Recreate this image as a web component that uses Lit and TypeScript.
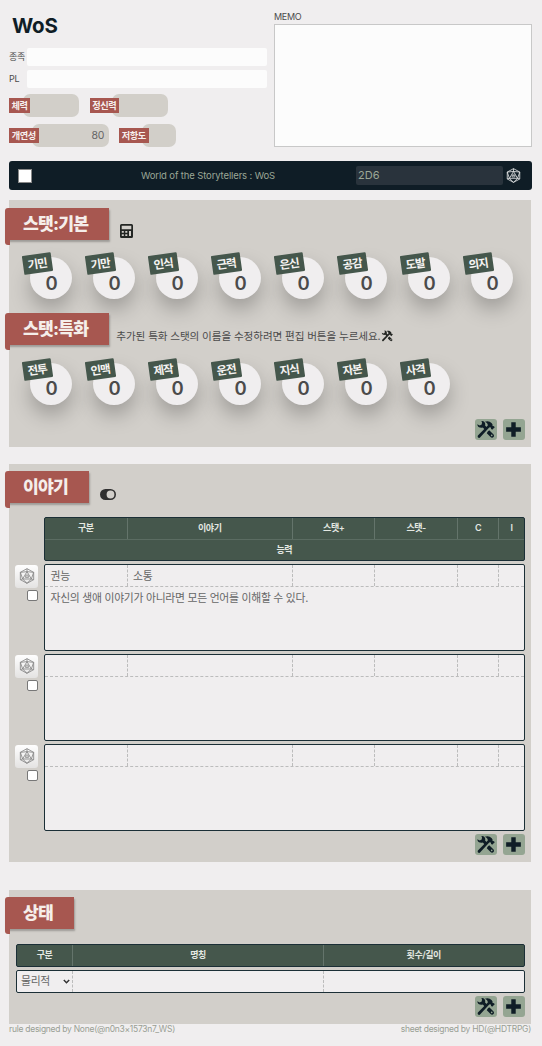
import { LitElement, html, css } from "lit";
import { customElement, property } from "lit/decorators.js";
import { classMap } from "lit/directives/class-map.js";

const die = html`<svg viewBox="0 0 24 24" fill="none" stroke="currentColor" stroke-width="1.3" stroke-linejoin="round">
  <path d="M12 1 22 6.500v11L12 23 2 17.500v-11Z"/>
  <path d="M12 1v4.500M2 6.500 12 5.500l10 1M12 5.500 5.500 16.500h13ZM2 6.500l3.500 10M22 6.500l-3.500 10M2 17.500l3.500-1L12 23l6.500-6.500 3.500 1"/>
  <path d="M9.800 14.300v-3l2.200-1.300 2.200 1.300v3ZM10.500 12h3" stroke-width="1.100"/>
</svg>`;

const tools = html`<svg viewBox="0 0 24 24" fill="currentColor">
  <path d="M6.800 1.300c2.800-.5 5.200 1.500 4.900 4.600l-.2 1.200 3 3-2.700 2.700-3.200-3.200C5.200 10.500 1.700 8.700 1.600 5.300l3.100 1.600 2.500-1.100.4-2.600Z"/>
  <path d="m14.900 14.500 1.800-1.700 5.200 5.100c1.200 1.200 1 2.800.2 3.700s-2.600 1.100-3.700 0l-4.800-4.800Zm4.200 4.200a1 1 0 1 0 1.500 1.500 1 1 0 0 0-1.500-1.500Z" fill-rule="evenodd"/>
  <path d="M11.200 2.200c3.400-1.500 6.500-.4 8.700 2l1.100 1.800-.2 1.300.8.600.8-.3 1.300 1.500-3.300 3.300-1.500-1.300.1-1-.9-.8-1.400.1L5.100 22.200c-1.400 1.300-4-.9-2.700-2.700L14.900 7c.2-2-1.300-3.800-3.700-4.800Z"/>
</svg>`;

const plus = html`<svg viewBox="0 0 24 24"><path fill="currentColor" d="M9.200 2.700h5.600v6.500h6.500v5.600h-6.500v6.500H9.200v-6.500H2.700V9.200h6.500Z"/></svg>`;

const calculator = html`<svg viewBox="0 0 13 14"><path fill="currentColor" fill-rule="evenodd" d="M1.500 0h10A1.500 1.500 0 0 1 13 1.500v11a1.500 1.500 0 0 1-1.500 1.500h-10A1.500 1.500 0 0 1 0 12.500v-11A1.500 1.500 0 0 1 1.500 0ZM1.700 1.800v3.400h9.600V1.800ZM1.800 7v1.700h2V7Zm3.500 0v1.700h2V7ZM9 7v5h2V7ZM1.800 10.300V12h2v-1.700Zm3.500 0V12h2v-1.700Z"/></svg>`;

const toggle = html`<svg viewBox="0 0 16 11"><path fill="currentColor" fill-rule="evenodd" d="M5.500 0h5a5.500 5.500 0 0 1 0 11h-5a5.500 5.500 0 0 1 0-11Zm5 1.600a3.900 3.900 0 1 0 0 7.800 3.900 3.900 0 0 0 0-7.800Z"/></svg>`;

@customElement("stat-disc")
class StatDisc extends LitElement {
  @property() label = "";
  @property() value = "0";
  static styles = css`
    :host { display: block; width: 42px; height: 42px; position: relative; }
    .disc { width: 42px; height: 42px; box-sizing: border-box; padding: 9px 0 0 1px; border-radius: 50%; background: #f0eeef;
      box-shadow: 0 10px 20px rgba(0,0,0,.25); display: grid; place-items: center; font-weight: 600; font-size: 18.500px; line-height: 22px; color: #4b4b4b; }
    .tag { position: absolute; left: -7px; top: -3px; width: 28.500px; height: 19px; border-radius: 1px; background: #45574c; color: #f5f3f1;
      font-size: 11.500px; line-height: 20px; font-weight: 600; text-align: center; letter-spacing: -.9px; transform: rotate(-8deg); }
  `;
  render() {
    return html`<div class="disc">${this.value}</div><div class="tag">${this.label}</div>`;
  }
}

@customElement("section-banner")
class SectionBanner extends LitElement {
  @property() label = "";
  static styles = css`
    :host { display: block; margin-left: -4px; }
    .flag { height: 32px; padding: 0 21px 0 18px; border-radius: 3px 0 0 0; background: #a75750; color: #f5eeea; box-sizing: border-box;
      font-size: 17.200px; line-height: 32px; font-weight: 800; letter-spacing: -.8px; white-space: nowrap; box-shadow: 1px 2px 2px rgba(0,0,0,.25); position: relative; }
    .fold { width: 5px; height: 5px; background: #a75750; border-radius: 0 0 0 3px; position: relative; }
  `;
  render() {
    return html`<div class="flag">${this.label}</div><div class="fold"></div>`;
  }
}

@customElement("app-root")
class AppRoot extends LitElement {
  basic = ["기민", "기만", "인식", "근력", "은신", "공감", "도발", "의지"];
  special = ["전투", "인맥", "제작", "운전", "지식", "자본", "사격"];
  stories = [
    { kind: "권능", name: "소통", text: "자신의 생애 이야기가 아니라면 모든 언어를 이해할 수 있다." },
    { kind: "", name: "", text: "" },
    { kind: "", name: "", text: "" },
  ];

  static styles = css`
    :host { display: block; height: 1046px; box-sizing: border-box; padding: 10px 10.500px 0 9px; background: #f0eeef; color: #4b4b4b;
      font-family: Inter, "Noto Sans CJK KR", sans-serif; font-size: 11px; overflow: hidden; }
    * { box-sizing: border-box; }
    svg { display: block; }
    .top { display: grid; grid-template-columns: 258px 257.500px; column-gap: 7px; height: 151px; }
    h1 { margin: 0 0 7px 3px; height: 31px; line-height: 32px; font-size: 20.500px; font-weight: 700; letter-spacing: -.2px; color: #0f1d26; }
    .field { display: flex; align-items: center; height: 18px; margin-bottom: 3.500px; font-size: 9px; line-height: 17px; letter-spacing: -.2px; }
    .field span { width: 18px; height: 18px; white-space: nowrap; }
    .field i { flex: 1; height: 18px; border-radius: 2px; background: #fcfcfc; }
    .chips { display: flex; gap: 10.500px; height: 22.500px; margin-top: 6.500px; }
    .chips.second { margin-top: 7.500px; }
    .chip { display: flex; align-items: center; }
    .chip b { height: 15px; line-height: 15.500px; padding: 0 2.500px; background: #a75750; color: #f7f0ee; font-size: 9.200px; font-weight: 600; letter-spacing: -.5px; white-space: nowrap; position: relative; z-index: 1; text-align: center; width: 29.500px; }
    .chip.short b { width: 21px; }
    .chip span { height: 22.500px; margin-left: -7px; border-radius: 7px; background: #d2cfc9; width: 56px; text-align: right; padding-right: 4px; line-height: 23px; font-size: 10.500px; color: #656565; }
    .chip.wide span { width: 77px; }
    .chip.narrow span { width: 34.500px; }
    .memo-label { height: 14px; line-height: 13px; font-size: 9px; letter-spacing: -.3px; }
    .memo { height: 123px; background: #fcfcfc; border: 1px solid #c8c8c8; }
    .bar { height: 29px; border-radius: 3px; background: #0f1d26; display: grid; grid-template-columns: 14px 1fr 147px 18px; align-items: center; padding: 0 11px 0 8.500px; color: #9ba796; }
    .box { width: 14px; height: 14px; background: #fff; border: .5px solid #888; }
    .bar p { margin: 0 0 0 29px; text-align: center; font-size: 9.500px; letter-spacing: -.13px; }
    .bar .roll { height: 19px; line-height: 19px; padding-left: 2.500px; border-radius: 2px; background: #29333c; font-size: 11px; }
    .bar svg { width: 15px; height: 15px; margin-left: 3px; color: #e6e8e8; }
    .panel { background: #d2cfca; width: 522px; }
    .stats { margin-top: 10px; height: 246.500px; padding-top: 7.500px; }
    .head { display: flex; height: 37px; }
    .head .calc { width: 13px; margin: 16.500px 0 0 10.500px; height: 14px; color: #232623; }
    .head .tog { width: 16px; height: 11px; margin: 18px 0 0 10.500px; color: #303030; }
    .head p { display: flex; align-items: center; height: 14px; margin: 15.500px 0 0 7px; font-size: 10.600px; letter-spacing: -.1px; white-space: nowrap; }
    .head p svg { width: 12px; height: 12px; color: #232623; }
    .discs { display: flex; gap: 21px; padding: 12.500px 0 0 21px; height: 68.500px; }
    .actions { display: flex; justify-content: flex-end; gap: 6.500px; padding-right: 6.500px; }
    .actions button { width: 21.500px; height: 21px; border: 0; border-radius: 3px; background: #94a592; color: #0f1d26; padding: 1px; display: grid; place-items: center; }
    .actions svg { width: 19px; height: 19px; }
    .stats .actions { margin-top: .5px; }
    .story { margin-top: 17px; height: 398.500px; padding-top: 7px; }
    .cols { display: grid; grid-template-columns: 82.500px 165.500px 82.400px 82.500px 41.500px 1fr; }
    .grid { border: 1px solid #1b2f36; border-radius: 2px; overflow: hidden; background: #f0eeef; }
    .thead { background: #45574c; color: #e4e8e2; font-size: 9px; font-weight: 600; letter-spacing: -.45px; text-align: center; }
    .thead .cols > *, .thead .cols2 > * { line-height: 20px; height: 21px; border-right: 1px solid #64746b; }
    .thead .cols > :last-child, .thead .cols2 > :last-child { border-right: 0; }
    .thead .full { border-top: 1px solid #5b6c62; height: 22px; line-height: 20px; }
    .story .thead { margin: 9px 6.500px 3.500px 35px; height: 44px; }
    .tbody { font-size: 10.800px; letter-spacing: -.25px; color: #666; }
    .tbody .cols { border-bottom: 1px dashed #bcbcbc; }
    .tbody .cols > *, .tbody .cols2 > * { height: 21px; line-height: 23px; padding-left: 5.500px; border-right: 1px dashed #bcbcbc; }
    .tbody .cols > :last-child, .tbody .cols2 > :last-child { border-right: 0; }
    .note { line-height: 23px; padding-left: 5.500px; }
    .entry { display: grid; grid-template-columns: 23px 480.500px; column-gap: 6px; padding-left: 6px; height: 90px; }
    .entry .tbody { height: 86.500px; }
    .side { display: flex; flex-direction: column; align-items: flex-end; }
    .side button { width: 23px; height: 23px; padding: 3.500px; border: 0; border-radius: 3px; background: linear-gradient(#fefefe, #e4e3e2); color: #888; margin: .5px 0 2px; }
    .side svg { width: 16px; height: 16px; }
    .check { width: 11px; height: 11px; border: 1px solid #777; border-radius: 2px; background: #fff; }
    .state { margin-top: 28px; height: 133.500px; padding-top: 7px; }
    .cols2 { display: grid; grid-template-columns: 56px 251px 1fr; }
    .state .grid { height: 23px; margin: 0 6.500px 3px 7px; }
    .state .thead { margin-top: 9.500px; }
    .state .pick { display: flex; align-items: center; justify-content: space-between; padding: 0 2px 0 4px; }
    .pick svg { width: 7px; height: 5px; color: #333; }
    footer { display: flex; justify-content: space-between; font-size: 8.500px; line-height: 11px; letter-spacing: -.27px; color: #999e94; width: 522px; }
  `;

  actions() {
    return html`<div class="actions"><button>${tools}</button><button>${plus}</button></div>`;
  }

  chip(label: string, kind: string, value = "") {
    return html`<div class=${classMap({ chip: true, short: label.length < 3, wide: kind === "wide", narrow: kind === "narrow" })}><b>${label}</b><span>${value}</span></div>`;
  }

  render() {
    return html`
      <div class="top">
        <div>
          <h1>WoS</h1>
          <div class="field"><span>종족</span><i></i></div>
          <div class="field"><span>PL</span><i></i></div>
          <div class="chips">${this.chip("체력", "")}${this.chip("정신력", "")}</div>
          <div class="chips second">${this.chip("개연성", "wide", "80")}${this.chip("저항도", "narrow")}</div>
        </div>
        <div><div class="memo-label">MEMO</div><div class="memo"></div></div>
      </div>
      <div class="bar"><div class="box"></div><p>World of the Storytellers : WoS</p><div class="roll">2D6</div>${die}</div>

      <div class="panel stats">
        <div class="head"><section-banner label="스탯:기본"></section-banner><div class="calc">${calculator}</div></div>
        <div class="discs">${this.basic.map((s) => html`<stat-disc label=${s}></stat-disc>`)}</div>
        <div class="head"><section-banner label="스탯:특화"></section-banner><p>추가된 특화 스탯의 이름을 수정하려면 편집 버튼을 누르세요.${tools}</p></div>
        <div class="discs">${this.special.map((s) => html`<stat-disc label=${s}></stat-disc>`)}</div>
        ${this.actions()}
      </div>

      <div class="panel story">
        <div class="head"><section-banner label="이야기"></section-banner><div class="tog">${toggle}</div></div>
        <div class="grid thead">
          <div class="cols"><div>구분</div><div>이야기</div><div>스탯+</div><div>스탯-</div><div>C</div><div>I</div></div>
          <div class="full">능력</div>
        </div>
        ${this.stories.map((s) => html`<div class="entry">
          <div class="side"><button>${die}</button><div class="check"></div></div>
          <div class="grid tbody">
            <div class="cols"><div>${s.kind}</div><div>${s.name}</div><div></div><div></div><div></div><div></div></div>
            <div class="note">${s.text}</div>
          </div>
        </div>`)}
        ${this.actions()}
      </div>

      <div class="panel state">
        <div class="head"><section-banner label="상태"></section-banner></div>
        <div class="grid thead"><div class="cols2"><div>구분</div><div>명칭</div><div>횟수/길이</div></div></div>
        <div class="grid tbody"><div class="cols2"><div class="pick">물리적<svg viewBox="0 0 7 5"><path d="m.8 1 2.700 2.700L6.200 1" fill="none" stroke="currentColor" stroke-width="1.500"/></svg></div><div></div><div></div></div></div>
        ${this.actions()}
      </div>
      <footer><span>rule designed by None(@n0n3×1573n7_WS)</span><span>sheet designed by HD(@HDTRPG)</span></footer>
    `;
  }
}
